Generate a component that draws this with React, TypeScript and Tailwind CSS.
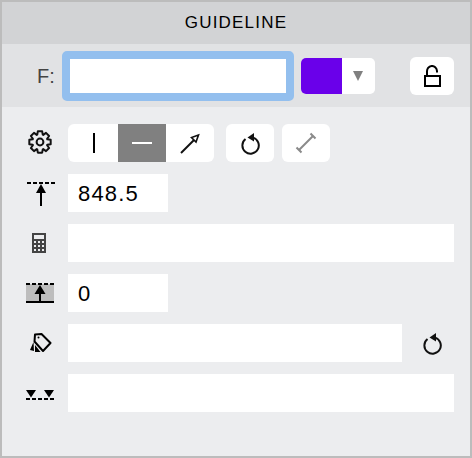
import type { ReactNode } from "react";

const FONT = { fontFamily: '"Liberation Sans", Arial, sans-serif' };

// 8 tooth cog outline, centred on 12,12
function cogPath() {
  const teeth = 8;
  const pts: string[] = [];
  for (let i = 0; i < teeth; i++) {
    const a = (i / teeth) * Math.PI * 2;
    const spots: [number, number][] = [
      [7.8, -0.36],
      [10.9, -0.2],
      [10.9, 0.2],
      [7.8, 0.36],
    ];
    for (const [r, d] of spots) {
      const x = 12 + r * Math.sin(a + d);
      const y = 12 - r * Math.cos(a + d);
      pts.push(`${x.toFixed(2)} ${y.toFixed(2)}`);
    }
  }
  return `M${pts.join(" L")} Z`;
}

function UndoIcon() {
  return (
    <svg width="22" height="24" viewBox="0 0 22 24" fill="none" stroke="#111" strokeWidth="2">
      <path d="M6.5 8 A8.2 8.2 0 1 0 14 6.6" />
      <path d="M15 2 L8.5 6.5 L15 10.5 Z" fill="#111" stroke="none" />
    </svg>
  );
}

function RowIcon({ children }: { children: ReactNode }) {
  return <div className="flex w-[56px] shrink-0 items-center justify-center">{children}</div>;
}

function TextBox({ value, className }: { value?: string; className: string }) {
  return (
    <div className={`flex h-[38px] items-center bg-white pl-[10px] text-[22px] tracking-[1.2px] text-black ${className}`}>
      {value}
    </div>
  );
}

export default function App() {
  return (
    <div style={FONT} className="flex h-[458px] w-[472px] flex-col border-2 border-[#bcbcbc] bg-[#ecedef]">
      <div className="flex h-[42px] shrink-0 items-center justify-center bg-[#d2d3d5] text-[17px] tracking-[1.2px] text-black">
        GUIDELINE
      </div>

      <div className="flex h-[63px] shrink-0 items-center bg-[#e1e2e4] pl-[35px]">
        <span className="text-[20px] text-[#444]">F:</span>
        <div className="ml-[7px] h-[50px] w-[232px] rounded-[5px] border-[8px] border-[#93bfee] bg-white" />
        <div className="ml-[7px] flex h-[36px] w-[74px] overflow-hidden rounded-[5px] bg-white">
          <div className="w-[41px] bg-[#6a00ea]" />
          <div className="flex flex-1 items-center justify-center">
            <div className="h-0 w-0 border-x-[5px] border-t-[10px] border-x-transparent border-t-[#808080]" />
          </div>
        </div>
        <div className="ml-[35px] flex h-[38px] w-[44px] items-center justify-center rounded-[6px] bg-white">
          <svg width="18" height="22" viewBox="0 0 18 22" fill="none" stroke="#000" strokeWidth="2">
            <rect x="2" y="11" width="15" height="10" />
            <path d="M4 11 V7 A5 5.5 0 0 1 14 6 V7.5" />
          </svg>
        </div>
      </div>

      <div className="flex flex-col gap-[12px] pt-[17px]">
        <div className="flex items-center">
          <RowIcon>
            <svg width="24" height="24" viewBox="0 0 24 24" fill="none" stroke="#111" strokeWidth="2" strokeLinejoin="round" className="mb-[3px] ml-[20px]">
              <path d={cogPath()} />
              <circle cx="12" cy="12" r="3.4" />
            </svg>
          </RowIcon>
          <div className="ml-[10px] flex h-[38px] w-[146px] overflow-hidden rounded-[6px] bg-white">
            <div className="flex w-[50px] items-center justify-center">
              <div className="ml-[2px] h-[20px] w-[2px] bg-black" />
            </div>
            <div className="flex w-[48px] items-center justify-center bg-[#808080]">
              <div className="h-[2px] w-[20px] bg-white" />
            </div>
            <div className="flex w-[48px] items-center justify-center">
              <svg width="22" height="22" viewBox="0 0 22 22" fill="none" stroke="#111" strokeWidth="2">
                <path d="M2 21 L15 8" />
                <path d="M19.5 3 L12.5 5.5 L17 10 Z" strokeWidth="1.6" />
              </svg>
            </div>
          </div>
          <div className="ml-[12px] flex h-[38px] w-[48px] items-center justify-center rounded-[6px] bg-white">
            <UndoIcon />
          </div>
          <div className="ml-[8px] flex h-[38px] w-[48px] items-center justify-center rounded-[6px] bg-white">
            <svg width="22" height="22" viewBox="0 0 22 22" fill="none" stroke="#8a8a8a" strokeWidth="2">
              <path d="M4 18 L18 4" />
              <path d="M1.5 15.5 L6.5 20.5 M15.5 1.5 L20.5 6.5" />
            </svg>
          </div>
        </div>

        <div className="flex items-center">
          <RowIcon>
            <svg width="28" height="24" viewBox="0 0 28 24" className="mt-[2px] ml-[22px]" stroke="#000" fill="none">
              <path d="M0 1 H28" strokeWidth="2" strokeDasharray="4 2" />
              <path d="M14 8 V24" strokeWidth="2" />
              <path d="M14 2 L9 11 H19 Z" fill="#000" stroke="none" />
            </svg>
          </RowIcon>
          <TextBox value="848.5" className="ml-[10px] w-[100px]" />
        </div>

        <div className="flex items-center">
          <RowIcon>
            <svg width="14" height="20" viewBox="0 0 14 20" className="ml-[18px]">
              <path
                fillRule="evenodd"
                fill="#444"
                d="M0 0 H14 V20 H0 Z M2 2 V6 H12 V2 Z M2 8 V10 H4 V8 Z M6 8 V10 H8 V8 Z M10 8 V10 H12 V8 Z M2 12 V14 H4 V12 Z M6 12 V14 H8 V12 Z M10 12 V14 H12 V12 Z M2 16 V18 H4 V16 Z M6 16 V18 H8 V16 Z M10 16 V18 H12 V16 Z"
              />
            </svg>
          </RowIcon>
          <TextBox className="ml-[10px] w-[386px]" />
        </div>

        <div className="flex items-center">
          <RowIcon>
            <svg width="28" height="20" viewBox="0 0 28 20" className="ml-[20px]" fill="none" stroke="#000">
              <rect x="0" y="1" width="28" height="18" fill="#bdbdbd" stroke="none" />
              <path d="M0 1 H28" strokeWidth="2" strokeDasharray="4 2" />
              <path d="M0 19 H28" strokeWidth="2" />
              <path d="M14 10 V19" strokeWidth="2" />
              <path d="M14 2 L8.5 11 H19.5 Z" fill="#000" stroke="none" />
            </svg>
          </RowIcon>
          <TextBox value="0" className="ml-[10px] w-[100px]" />
        </div>

        <div className="flex items-center">
          <RowIcon>
            <svg width="22" height="20" viewBox="0 0 22 20" className="ml-[22px]" fill="none">
              <path d="M3.5 9 L0 17 L4 18 Z" fill="#000" />
              <path d="M5 12 L5 19 L10.5 19 Z" fill="#000" />
              <path d="M5 1.5 L11.5 1 L20.5 10 L13 18 L4.5 8.5 Z" stroke="#000" strokeWidth="2" strokeLinejoin="round" />
              <circle cx="8.5" cy="4.5" r="1" fill="#000" />
            </svg>
          </RowIcon>
          <TextBox className="ml-[10px] w-[334px]" />
          <div className="ml-[19px] flex">
            <UndoIcon />
          </div>
        </div>

        <div className="flex items-center">
          <RowIcon>
            <svg width="28" height="10" viewBox="0 0 28 10" className="mt-[4px] ml-[20px]" stroke="#000" fill="none">
              <path d="M0 0 H10 L5 7.5 Z" fill="#000" stroke="none" />
              <path d="M18 0 H28 L23 7.5 Z" fill="#000" stroke="none" />
              <path d="M0 9 H28" strokeWidth="2" strokeDasharray="4 2" />
            </svg>
          </RowIcon>
          <TextBox className="ml-[10px] w-[386px]" />
        </div>
      </div>
    </div>
  );
}
